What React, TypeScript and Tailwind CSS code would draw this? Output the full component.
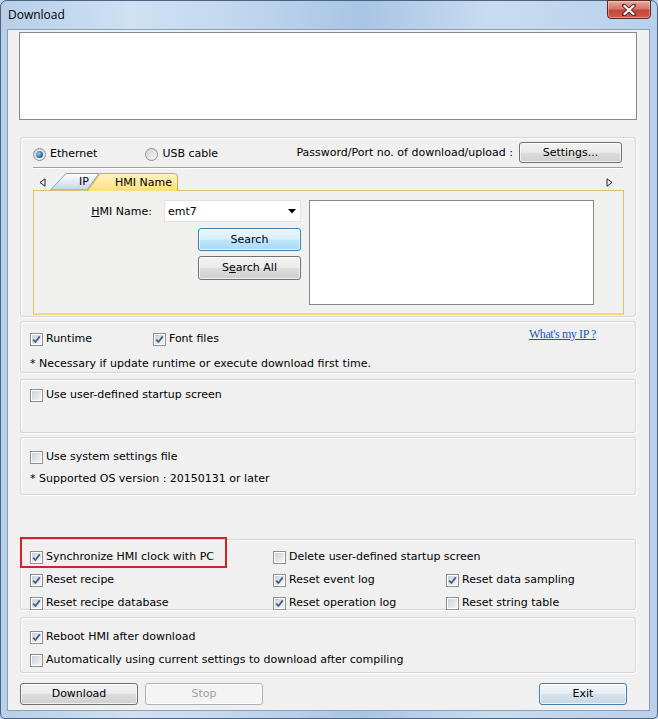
import React from 'react';

const ui = "font-['DejaVu_Sans',sans-serif] text-[11px] text-black";

export default function App() {
  return (
    <div className="w-[658px] h-[719px] bg-[#bcd3ec]">
      <div className="w-[658px] h-[719px] flex flex-col rounded-t-[7px] rounded-b-[5px] border border-[#4d6480] bg-[linear-gradient(90deg,#b7cfe9_0%,#cfe1f3_20%,#c2d8ef_35%,#a9c5e4_55%,#c8dcf1_75%,#b8d0ea_100%)]">
        {/* Title bar */}
        <div className="h-[28px] flex items-start justify-between pl-[7px]">
          <span className="mt-[5px] font-['Open_Sans',sans-serif] text-[12px] text-black">
            Download
          </span>
          <button className="w-[44px] h-[19px] mr-[6px] -mt-px rounded-b-[4px] border border-[#5a2a25] bg-[linear-gradient(180deg,#e9a99b_0%,#d5766a_45%,#c5443a_55%,#d35c4a_100%)] flex items-center justify-center shadow-[inset_0_0_0_1px_rgba(255,255,255,0.35)]">
            <svg width="14" height="12" viewBox="0 0 14 12">
              <path d="M2 1.5 L12 10.5 M12 1.5 L2 10.5" stroke="#5b2a24" strokeWidth="4" strokeLinecap="round" />
              <path d="M2.5 2 L11.5 10 M11.5 2 L2.5 10" stroke="#ffffff" strokeWidth="2.2" strokeLinecap="round" />
            </svg>
          </button>
        </div>

        {/* Client area */}
        <div className="flex">
          <div className="ml-[6px] border border-[#8aa0ba] bg-[#f0f0f0] w-[643px] h-[682px]">
            <div className={`${ui} flex flex-col w-[641px] h-[680px]`}>
              <div className="mt-[2px] ml-[11px] w-[618px] h-[88px] border border-[#828790] bg-white" />

              {/* Connection */}
              <GroupBox className="mt-[17px] h-[180px]">
                <div className="flex items-center h-[21px] mt-[4px] pl-[12px] pr-[13px]">
                  <div className="flex items-center gap-[48px] pt-[3px]">
                    <Radio checked label="Ethernet" />
                    <Radio label="USB cable" />
                  </div>
                  <span className="ml-auto mr-[6px] pt-[2px]">Password/Port no. of download/upload :</span>
                  <Btn className="w-[103px] h-[21px]">Settings...</Btn>
                </div>
                <div className="mt-[4px] mx-[12px] h-[2px] border-t border-[#a0a0a0] border-b border-b-white" />
                <div className="mt-[4px] mx-[12px] flex items-end h-[18px] -mb-px relative z-10">
                  <svg width="7" height="9" viewBox="0 0 7 9" className="ml-[6px] mb-[4px]">
                    <path d="M6 0.8 L1 4.5 L6 8.2 Z" fill="none" stroke="#222" strokeWidth="1" />
                  </svg>
                  <div className="relative w-[50px] h-[17px] ml-[4px] mb-px">
                    <svg width="50" height="17" viewBox="0 0 50 17" className="absolute inset-0">
                      <defs>
                        <linearGradient id="ipg" x1="0" y1="0" x2="0" y2="1">
                          <stop offset="0" stopColor="#ffffff" />
                          <stop offset="1" stopColor="#c3d5ee" />
                        </linearGradient>
                      </defs>
                      <path d="M0.5 17 L16 0.5 L49 0.5 L37 17 Z" fill="url(#ipg)" stroke="#8d9db3" />
                    </svg>
                    <span className="relative block pl-[29px] leading-[18px]">IP</span>
                  </div>
                  <div className="relative w-[91px] h-[18px] -ml-[13px]">
                    <svg width="91" height="18" viewBox="0 0 91 18" className="absolute inset-0">
                      <defs>
                        <linearGradient id="hmg" x1="0" y1="0" x2="0" y2="1">
                          <stop offset="0" stopColor="#fff5c2" />
                          <stop offset="1" stopColor="#ffdf7a" />
                        </linearGradient>
                      </defs>
                      <path d="M0.5 18 L13 0.5 L87 0.5 Q90.5 0.5 90.5 4 L90.5 18" fill="url(#hmg)" stroke="#c9ab5c" />
                    </svg>
                    <span className="relative block pl-[28px] leading-[19px]">HMI Name</span>
                  </div>
                  <svg width="7" height="9" viewBox="0 0 7 9" className="ml-auto mr-[10px] mb-[4px]">
                    <path d="M1 0.8 L6 4.5 L1 8.2 Z" fill="none" stroke="#222" strokeWidth="1" />
                  </svg>
                </div>
                <div className="ml-[12px] w-[591px] h-[125px] border border-[#dcc16a] border-b-2 border-b-[#f2d877] bg-[#f0f0ee] flex pt-[9px]">
                  <div className="w-[267px] flex flex-col items-end">
                    <div className="flex items-center">
                      <span className="mr-[12px] pt-[2px]">
                        <span className="underline">H</span>MI Name:
                      </span>
                      <div className="w-[137px] h-[22px] bg-white border border-[#e2e2e2] flex items-center justify-between pl-[3px] pr-[4px]">
                        <span className="pt-[2px]">emt7</span>
                        <svg width="8" height="5" viewBox="0 0 8 5">
                          <path d="M0 0 L8 0 L4 4.5 Z" fill="#000" />
                        </svg>
                      </div>
                    </div>
                    <Btn blue className="w-[103px] h-[23px] mt-[6px]">Search</Btn>
                    <Btn className="w-[103px] h-[24px] mt-[5px]">
                      S<span className="underline">e</span>arch All
                    </Btn>
                  </div>
                  <div className="ml-[8px] w-[285px] h-[105px] bg-white border border-[#828790]" />
                </div>
              </GroupBox>

              {/* Runtime */}
              <GroupBox className="mt-[4px] h-[52px] pl-[9px]">
                <div className="flex items-start">
                  <div className="mt-[10px] flex">
                    <Check checked label="Runtime" />
                    <div className="ml-[61px]">
                      <Check checked label="Font files" />
                    </div>
                  </div>
                  <a className="ml-auto mr-[39px] mt-[3px] font-['Liberation_Serif',serif] text-[12px] tracking-[-0.4px] text-[#1b57b4] underline">
                    What's my IP ?
                  </a>
                </div>
                <div className="mt-[11px] leading-[14px]">* Necessary if update runtime or execute download first time.</div>
              </GroupBox>

              {/* Startup screen */}
              <GroupBox className="mt-[6px] h-[54px] pl-[9px] pt-[8px]">
                <Check label="Use user-defined startup screen" />
              </GroupBox>

              {/* System settings */}
              <GroupBox className="mt-[4px] h-[58px] pl-[9px] pt-[12px]">
                <Check label="Use system settings file" />
                <div className="mt-[8px] leading-[14px]">* Supported OS version : 20150131 or later</div>
              </GroupBox>

              {/* Reset options */}
              <GroupBox className="mt-[44px] h-[71px] pl-[9px] pt-[10px] relative">
                <div className="absolute left-[-1px] top-[-3px] w-[207px] h-[31px] border-2 border-[#d3222c]" />
                <div className="grid grid-cols-[243px_173px_1fr] gap-y-[9px]">
                  <Check checked label="Synchronize HMI clock with PC" />
                  <Check label="Delete user-defined startup screen" />
                  <span />
                  <Check checked label="Reset recipe" />
                  <Check checked label="Reset event log" />
                  <Check checked label="Reset data sampling" />
                  <Check checked label="Reset recipe database" />
                  <Check checked label="Reset operation log" />
                  <Check label="Reset string table" />
                </div>
              </GroupBox>

              {/* Reboot */}
              <GroupBox className="mt-[7px] h-[56px] pl-[9px] pt-[12px]">
                <div className="flex flex-col gap-y-[9px]">
                  <Check checked label="Reboot HMI after download" />
                  <Check label="Automatically using current settings to download after compiling" />
                </div>
              </GroupBox>

              {/* Buttons */}
              <div className="mt-[10px] ml-[12px] flex items-center">
                <Btn className="w-[118px] h-[22px]">Download</Btn>
                <Btn disabled className="w-[118px] h-[22px] ml-[7px]">Stop</Btn>
                <Btn exit className="w-[88px] h-[22px] ml-auto mr-[22px]">Exit</Btn>
              </div>
            </div>
          </div>
        </div>
      </div>
    </div>
  );
}

function GroupBox({ className = '', children }: { className?: string; children?: React.ReactNode }) {
  return (
    <div
      className={`ml-[12px] w-[616px] rounded-[3px] border border-[#d5d5d5] shadow-[inset_1px_1px_0_#ffffff,1px_1px_0_#ffffff] ${className}`}
    >
      {children}
    </div>
  );
}

function Check({ checked = false, label }: { checked?: boolean; label: string }) {
  return (
    <div className="flex items-center h-[14px] whitespace-nowrap">
      <span className="w-[13px] h-[13px] border border-[#8e8f8f] bg-white p-px shrink-0">
        <span className="w-full h-full flex items-center justify-center bg-[linear-gradient(135deg,#cdd1d6,#f4f4f4)]">
          {checked && (
            <svg width="9" height="9" viewBox="0 0 9 9">
              <path d="M1.2 4.6 L3.4 7 L7.8 1.4" stroke="#3e5a8c" strokeWidth="1.7" fill="none" />
            </svg>
          )}
        </span>
      </span>
      <span className="ml-[3px] pt-px">{label}</span>
    </div>
  );
}

function Radio({ checked = false, label }: { checked?: boolean; label: string }) {
  return (
    <div className="flex items-center whitespace-nowrap">
      <span className="w-[13px] h-[13px] rounded-full border border-[#8e8f8f] bg-[linear-gradient(135deg,#d0d3d8,#f7f7f7)] flex items-center justify-center shrink-0">
        {checked && (
          <span className="w-[7px] h-[7px] rounded-full bg-[radial-gradient(circle_at_35%_35%,#8ed0f5,#1b63a4_70%)]" />
        )}
      </span>
      <span className="ml-[4px] pt-px">{label}</span>
    </div>
  );
}

function Btn({
  className = '',
  blue = false,
  exit = false,
  disabled = false,
  children,
}: {
  className?: string;
  blue?: boolean;
  exit?: boolean;
  disabled?: boolean;
  children: React.ReactNode;
}) {
  let look =
    'border-[#707070] bg-[linear-gradient(180deg,#f2f2f2_0%,#ebebeb_48%,#dddddd_52%,#cfcfcf_100%)] text-black';
  if (blue)
    look =
      'border-[#3c7fb1] bg-[linear-gradient(180deg,#eaf6fd_0%,#d9f0fc_48%,#bee6fd_52%,#a7d9f5_100%)] text-black';
  if (exit)
    look =
      'border-[#3c7fb1] bg-[linear-gradient(180deg,#f2f7fb_0%,#e6eef5_48%,#d6e2ec_52%,#c9d8e6_100%)] text-black';
  if (disabled) look = 'border-[#adb2b5] bg-[#f4f4f4] text-[#a0a0a0]';
  return (
    <button
      className={`rounded-[3px] border pt-px shadow-[inset_0_0_0_1px_rgba(255,255,255,0.7)] flex items-center justify-center ${look} ${className}`}
    >
      {children}
    </button>
  );
}
